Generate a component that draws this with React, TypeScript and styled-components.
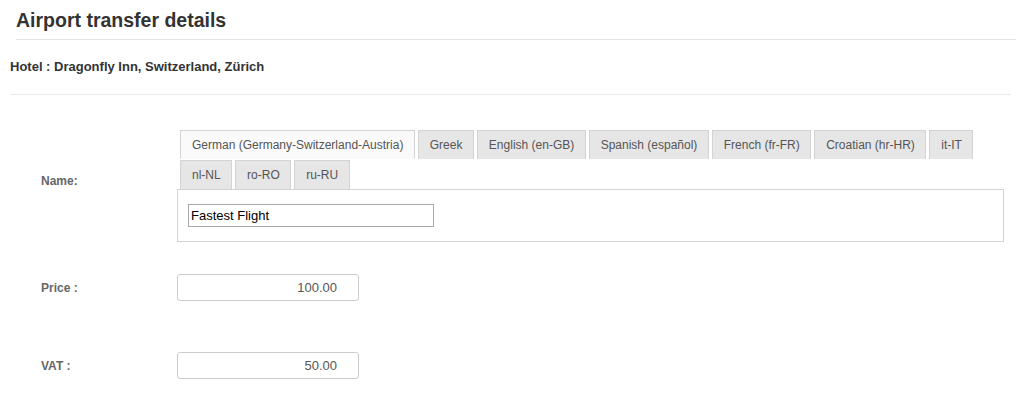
import React from 'react';
import styled, { createGlobalStyle } from 'styled-components';

const GlobalStyle = createGlobalStyle`
  html, body {
    margin: 0;
    padding: 0;
    background: #fff;
  }
  body {
    font-family: 'Liberation Sans', Arial, sans-serif;
    color: #333;
  }
`;

const Page = styled.div`
  width: 1022px;
  height: 401px;
  overflow: hidden;
`;

const Title = styled.h2`
  margin: 0 6px 0 16px;
  padding: 10px 0 9px;
  font-size: 19.5px;
  line-height: 20px;
  font-weight: bold;
  color: #333;
  border-bottom: 1px solid #e3e3e3;
`;

const HotelLine = styled.div`
  margin: 0 11px 0 10px;
  padding: 19px 0 19px;
  font-size: 13px;
  line-height: 16px;
  font-weight: bold;
  color: #333;
  border-bottom: 1px solid #eaeaea;
`;

const Form = styled.div`
  padding: 35px 18px 0 10px;
`;

const FormRow = styled.div<{ $gap?: number }>`
  display: grid;
  grid-template-columns: 167px 1fr;
  align-items: center;
  margin-top: ${({ $gap }) => $gap ?? 0}px;
`;

const Label = styled.label<{ $shift?: number }>`
  padding-left: 31px;
  padding-bottom: ${({ $shift }) => $shift ?? 0}px;
  font-size: 12px;
  font-weight: bold;
  color: #666;
`;

const TabList = styled.ul`
  display: flex;
  flex-wrap: wrap;
  list-style: none;
  margin: 0 0 -1px;
  padding: 0 0 0 3px;
  column-gap: 3px;
  position: relative;
`;

const Tab = styled.li<{ $active?: boolean }>`
  height: 29px;
  box-sizing: border-box;
  padding: 0 10.4px 0 11px;
  border: 1px solid #d3d3d3;
  border-bottom: ${({ $active }) => ($active ? '1px solid #fafafa' : 'none')};
  background: ${({ $active }) => ($active ? '#fafafa' : '#e6e6e6')};
  color: #555;
  font-size: 12px;
  line-height: 28px;
  white-space: nowrap;
  margin-bottom: 1px;
`;

const Panel = styled.div`
  border: 1px solid #d3d3d3;
  padding: 14px 10px 14px;
  background: #fff;
`;

const TextInput = styled.input`
  display: block;
  width: 246px;
  height: 23px;
  box-sizing: border-box;
  margin: 0;
  padding: 1px 2px;
  border: 1px solid #a9a9a9;
  font-family: 'Liberation Sans', Arial, sans-serif;
  font-size: 13px;
  color: #000;
  outline: none;
`;

const AmountInput = styled.input`
  display: block;
  width: 182px;
  height: 27px;
  box-sizing: border-box;
  margin: 0;
  padding: 0 21px 0 6px;
  border: 1px solid #ccc;
  border-radius: 3px;
  font-family: 'Liberation Sans', Arial, sans-serif;
  font-size: 13px;
  color: #555;
  text-align: right;
  outline: none;
`;

const languages = [
  'German (Germany-Switzerland-Austria)',
  'Greek',
  'English (en-GB)',
  'Spanish (español)',
  'French (fr-FR)',
  'Croatian (hr-HR)',
  'it-IT',
  'nl-NL',
  'ro-RO',
  'ru-RU',
];

const App: React.FC = () => {
  return (
    <>
      <GlobalStyle />
      <Page>
        <Title>Airport transfer details</Title>
        <HotelLine>Hotel : Dragonfly Inn, Switzerland, Zürich</HotelLine>
        <Form>
          <FormRow>
            <Label $shift={10}>Name:</Label>
            <div>
              <TabList>
                {languages.map((lang, i) => (
                  <Tab key={lang} $active={i === 0}>
                    {lang}
                  </Tab>
                ))}
              </TabList>
              <Panel>
                <TextInput defaultValue="Fastest Flight" />
              </Panel>
            </div>
          </FormRow>
          <FormRow $gap={32}>
            <Label>Price :</Label>
            <div>
              <AmountInput defaultValue="100.00" />
            </div>
          </FormRow>
          <FormRow $gap={51}>
            <Label>VAT :</Label>
            <div>
              <AmountInput defaultValue="50.00" />
            </div>
          </FormRow>
        </Form>
      </Page>
    </>
  );
};

export default App;
